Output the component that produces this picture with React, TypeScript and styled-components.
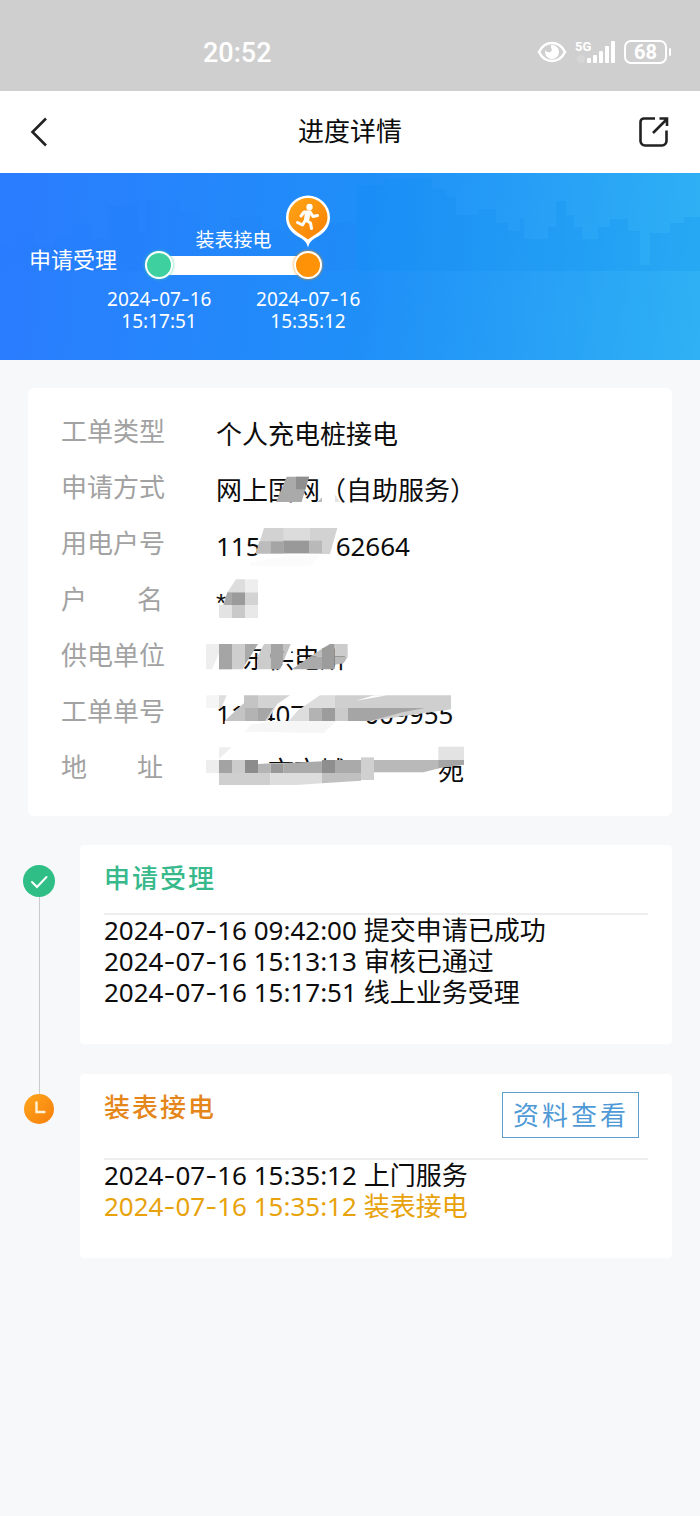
import React from "react";
import styled, { createGlobalStyle } from "styled-components";

const GlobalStyle = createGlobalStyle`
  * { box-sizing: border-box; }
  body {
    margin: 0;
    background: #f7f8fa;
    color: #0c0c0c;
    font-family: "Noto Sans", "Noto Sans CJK SC", sans-serif;
    font-size: 26px;
  }
  button { font: inherit; color: inherit; background: none; border: 0; padding: 0; cursor: pointer; }
  h1, h2, p, dl, dd, ul, ol { margin: 0; padding: 0; font-weight: 400; font-size: inherit; list-style: none; }
  svg { display: block; }
`;

const Page = styled.div`
  min-height: 100vh;
  display: flex;
  flex-direction: column;
`;

const StatusBar = styled.div`
  height: 91px;
  padding: 13px 28px 0 29%;
  display: flex;
  align-items: center;
  justify-content: space-between;
  background: #cfcfcf;
  color: #fff;
`;

const Clock = styled.span`
  padding-top: 2px;
  font-family: Roboto, sans-serif;
  font-weight: 500;
  font-size: 27px;
`;

const StatusIcons = styled.div`
  display: flex;
  align-items: center;
  gap: 8px;
`;

const Battery = styled.span`
  position: relative;
  width: 43px;
  height: 24px;
  margin-right: 5px;
  border: 2px solid #fff;
  border-radius: 7px;
  font: 700 20px/20px Roboto, sans-serif;
  text-align: center;
  &::after {
    content: "";
    position: absolute;
    right: -6px;
    top: 6px;
    width: 2px;
    height: 8px;
    border-radius: 1px;
    background: #fff;
  }
`;

const NavBar = styled.header`
  height: 82px;
  padding: 0 30px;
  display: grid;
  grid-template-columns: 32px 1fr 32px;
  align-items: center;
  background: #fff;
`;

const NavTitle = styled.h1`
  text-align: center;
  line-height: 38px;
  padding-bottom: 2px;
`;

const Banner = styled.section`
  position: relative;
  height: 187px;
  padding: 0 29px;
  display: flex;
  background: linear-gradient(96deg, #2b7cff 0%, #1f8ff8 52%, #2fb1f4 100%);
  color: #fff;
`;

const Skyline = styled.svg`
  position: absolute;
  left: 0;
  top: 0;
  width: 100%;
  height: 98px;
`;

const Origin = styled.p`
  position: relative;
  padding-top: 69px;
  font-size: 22px;
  line-height: 34px;
`;

const Stepper = styled.div`
  position: relative;
  width: 253px;
  margin-left: -10px;
  padding-top: 56px;
  font-size: 19px;
  line-height: 22px;
`;

const Caption = styled.p`
  height: 22px;
  text-align: center;
`;

const Track = styled.div`
  display: flex;
  align-items: center;
  padding: 0 38px;
`;

const Dot = styled.span<{ $color: string }>`
  position: relative;
  z-index: 1;
  width: 28px;
  height: 28px;
  border: 2px solid #fff;
  border-radius: 50%;
  background: ${(p) => p.$color};
  box-shadow: 0 0 3px ${(p) => p.$color};
`;

const Bar = styled.span`
  flex: 1;
  height: 19px;
  margin: 0 -4px;
  background: #fff;
`;

const Pin = styled.svg`
  position: absolute;
  left: 50%;
  bottom: 28px;
  transform: translateX(-50%);
`;

const Stamps = styled.div`
  display: flex;
  justify-content: space-between;
  padding-top: 9px;
  text-align: center;
`;

const Stamp = styled.div`
  width: 104px;
  white-space: nowrap;
`;

const Dash = styled.span`
  font-family: Inter, sans-serif;
  line-height: 0;
`;

const Info = styled.dl`
  margin: 28px 28px 29px;
  padding: 15px 33px 21px;
  border-radius: 6px;
  background: #fff;
`;

const InfoRow = styled.div`
  height: 56px;
  display: grid;
  grid-template-columns: 155px 1fr;
  line-height: 56px;
`;

const InfoLabel = styled.dt`
  width: 102px;
  display: flex;
  justify-content: space-between;
  white-space: nowrap;
  color: #a2a2a2;
`;

const InfoValue = styled.dd`
  position: relative;
  padding-top: 3px;
  white-space: nowrap;
`;

const Hidden = styled.span<{ $w: number }>`
  display: inline-block;
  width: ${(p) => p.$w}px;
`;

const Star = styled.span`
  font-family: "Liberation Sans", sans-serif;
`;

const Mosaic = styled.svg`
  position: absolute;
  left: -26px;
  top: 0;
`;

const Steps = styled.ol`
  padding-right: 28px;
`;

const Step = styled.li`
  display: grid;
  grid-template-columns: 80px 1fr;
`;

const Rail = styled.div`
  display: flex;
  flex-direction: column;
  align-items: center;
  padding-right: 2px;
`;

const Line = styled.span<{ $grow?: boolean; $on?: boolean }>`
  width: 1px;
  height: 20px;
  flex: ${(p) => (p.$grow ? "1" : "none")};
  background: ${(p) => (p.$on ? "#cbcbcb" : "transparent")};
`;

const Card = styled.article`
  margin-bottom: 30px;
  padding: 0 24px 36px;
  border-radius: 4px;
  background: #fff;
  line-height: 31px;
`;

const CardHead = styled.div`
  display: flex;
  justify-content: space-between;
  align-items: flex-start;
  padding-bottom: 2px;
  border-bottom: 2px solid #eeeeee;
`;

const CardTitle = styled.h2<{ $color: string }>`
  color: ${(p) => p.$color};
  line-height: 66px;
  letter-spacing: 2px;
  font-weight: 500;
`;

const ViewButton = styled.button`
  height: 46px;
  margin: 18px 9px 18px 0;
  padding: 0 9px 0 10px;
  border: 1px solid #5ea0cb;
  color: #4f9ad6;
  letter-spacing: 3px;
  line-height: 44px;
`;

const Entry = styled.li<{ $active?: boolean }>`
  color: ${(p) => (p.$active ? "#e8a20c" : "inherit")};
`;

type Shape = [string, string];

/* Each shape is a list of points and a grey; units are thirds of a pixel. */
const rows: { label: string; value: React.ReactNode; y?: number; shapes?: Shape[] }[] = [
  { label: "工单类型", value: "个人充电桩接电" },
  {
    label: "申请方式",
    value: "网上国网（自助服务）",
    y: 177,
    shapes: [
      ["290,230 357,230 335,306 258,306", "#aaaaaa"],
      ["318,230 357,230 346,268 318,268", "#8f8f8f"],
      ["383,306 396,292 396,306", "#bdbdbd"],
      ["435,284 450,306 435,306", "#e2e2e2"],
    ],
  },
  {
    label: "用电户号",
    value: <>115<Hidden $w={75} />62664</>,
    y: 345,
    shapes: [
      ["222,384 442,384 420,462 198,462", "#d2d2d2"],
      ["280,384 360,384 360,422 280,422", "#dcdcdc"],
      ["208,424 242,424 242,460 198,460", "#bcbcbc"],
      ["242,424 280,424 280,460 242,460", "#a5a5a5"],
      ["280,422 357,422 357,459 280,459", "#999999"],
      ["357,422 396,422 396,459 357,459", "#b9b9b9"],
      ["180,488 300,466 390,466 360,498 180,498", "#fbfbfb"],
    ],
  },
  {
    label: "户 名",
    value: <Star>*</Star>,
    y: 513,
    shapes: [
      ["138,538 165,538 165,577 112,577", "#dddddd"],
      ["165,538 204,538 204,577 165,577", "#eeeeee"],
      ["112,577 126,577 126,615 100,615", "#a8a8a8"],
      ["126,577 165,577 165,615 126,615", "#9b9b9b"],
      ["165,577 204,577 204,615 165,615", "#d3d3d3"],
      ["87,615 126,615 126,654 87,654", "#e3e3e3"],
      ["126,615 165,615 165,654 126,654", "#c9c9c9"],
      ["165,615 204,615 204,654 165,654", "#e8e8e8"],
    ],
  },
  {
    label: "供电单位",
    value: <><Hidden $w={26} />东供电所</>,
    y: -9,
    shapes: [
      ["281,30 318,30 300,76 330,76 300,90 281,90", "#ffffff"],
      ["48,42 87,42 87,70 66,118 48,118", "#eeeeee"],
      ["87,42 126,42 126,118 87,118", "#a5a5a5"],
      ["126,42 165,42 165,104 158,118 126,118", "#cecece"],
      ["165,42 204,42 178,84 165,104", "#aaaaaa"],
      ["222,42 242,42 242,118 202,118 202,80", "#cccccc"],
      ["242,42 281,42 281,92 270,118 242,118", "#a4a4a4"],
      ["281,42 302,42 281,92", "#c2c2c2"],
      ["420,42 434,42 434,118 396,118 396,56", "#9c9c9c"],
      ["396,56 396,80 360,80", "#bdbdbd"],
      ["360,80 396,80 396,118 306,118", "#aaaaaa"],
      ["434,42 473,42 473,80 434,80", "#cccccc"],
      ["434,80 473,80 461,100 434,104", "#bababa"],
    ],
  },
  {
    label: "工单单号",
    value: <>112407<Hidden $w={59} />009955</>,
    y: 159,
    shapes: [
      ["104,273 310,273 310,290 104,290", "#ffffff"],
      ["48,196 87,196 87,234 48,234", "#f5f5f5"],
      ["87,196 110,196 94,234 87,234", "#dedede"],
      ["162,196 204,196 204,273 104,273 145,234 162,220", "#c4c4c4"],
      ["204,196 300,196 262,222 232,273 204,273", "#d3d3d3"],
      ["165,234 204,234 204,273 165,273", "#b3b3b3"],
      ["204,234 250,234 225,273 204,273", "#a6a6a6"],
      ["390,196 435,196 435,273 296,273 325,240", "#dddddd"],
      ["435,196 783,196 783,238 540,273 435,273", "#cfcfcf"],
      ["357,234 396,234 396,273 357,273", "#b3b3b3"],
      ["396,234 435,234 435,273 396,273", "#9c9c9c"],
      ["435,234 474,234 474,273 435,273", "#cbcbcb"],
      ["474,234 705,234 640,246 540,273 474,273", "#a5a5a5"],
      ["552,196 592,196 498,212", "#ffffff"],
      ["182,284 260,273 440,273 400,310 165,305", "#f6f6f6"],
    ],
  },
  {
    label: "地 址",
    value: <><Hidden $w={52} />市市城<Hidden $w={92} />苑</>,
    y: 327,
    shapes: [
      ["180,400 552,396 552,474 180,474", "#ffffff"],
      ["48,390 87,390 87,429 48,429", "#eeeeee"],
      ["87,352 125,352 87,386", "#eeeeee"],
      ["87,390 126,390 126,429 87,429", "#a3a3a3"],
      ["126,390 165,390 165,429 126,429", "#cccccc"],
      ["165,390 204,390 204,429 165,429", "#8c8c8c"],
      ["204,402 242,400 242,429 204,429", "#b5b5b5"],
      ["242,400 281,400 281,429 242,429", "#999999"],
      ["281,400 396,394 396,429 281,429", "#aaaaaa"],
      ["396,390 435,390 435,429 396,429", "#8e8e8e"],
      ["435,390 513,390 513,429 435,429", "#aaaaaa"],
      ["513,382 552,382 552,450 513,450", "#d0d0d0"],
      ["87,429 242,429 242,465 87,465", "#cfcfcf"],
      ["242,429 396,429 396,460 320,465 242,465", "#dddddd"],
      ["396,429 513,429 513,452 396,460", "#c0c0c0"],
      ["552,390 822,390 822,404 760,412 700,427 552,427", "#b9b9b9"],
      ["745,350 822,350 822,390 745,390", "#e3e3e3"],
      ["745,390 822,390 822,404 760,412 745,415", "#a6a6a6"],
    ],
  },
];

function Labelled({ text }: { text: string }) {
  return (
    <InfoLabel>
      {text.split(" ").map((part) => (
        <span key={part}>{part}</span>
      ))}
    </InfoLabel>
  );
}

/* A date with the wide dashes of the Inter face. */
function DateText({ value }: { value: string }) {
  return (
    <time dateTime={value}>
      {value.split("-").map((part, i) => (
        <React.Fragment key={i}>
          {i > 0 && <Dash>-</Dash>}
          {part}
        </React.Fragment>
      ))}
    </time>
  );
}

export default function App() {
  return (
    <Page>
      <GlobalStyle />
      <StatusBar>
        <Clock>20:52</Clock>
        <StatusIcons>
          <svg width="30" height="22" viewBox="0 0 30 22" fill="none" aria-hidden="true">
            <path d="M2 11C5 5 9.500 2 15 2S25 5 28 11C25 17 20.500 20 15 20S5 17 2 11Z" stroke="#fff" strokeWidth="2.600" />
            <circle cx="15" cy="11" r="7" fill="#fff" />
            <path d="M8 5.500 14.500 4c-1.500 2.200.800 3.800.200 5.600-.600 1.900-3.200 2.300-6.200.400Z" fill="#cfcfcf" />
          </svg>
          <svg width="41" height="24" viewBox="0 0 41 24" fill="#fff" aria-hidden="true">
            <text x="0" y="11" fontFamily="Roboto, sans-serif" fontSize="13" fontWeight="700">5G</text>
            <circle cx="6" cy="19" r="4" opacity=".15" />
            <rect x="12" y="18" width="4" height="5" rx="1" />
            <rect x="18" y="15" width="4" height="8" rx="1" />
            <rect x="24" y="11" width="4" height="12" rx="1" />
            <rect x="30" y="6" width="4" height="17" rx="1" />
            <rect x="36" y="1" width="4" height="22" rx="1" />
          </svg>
          <Battery>68</Battery>
        </StatusIcons>
      </StatusBar>

      <NavBar>
        <button type="button" aria-label="返回">
          <svg width="20" height="32" viewBox="0 0 20 32" fill="none" stroke="#222" strokeWidth="2.600">
            <path d="M16 2.500 2.500 16 16 29.500" />
          </svg>
        </button>
        <NavTitle>进度详情</NavTitle>
        <button type="button" aria-label="分享">
          <svg width="32" height="32" viewBox="0 0 32 32" fill="none" stroke="#222" strokeWidth="2.600">
            <path d="M17 2.500H6A3.500 3.500 0 0 0 2.500 6v19A4.500 4.500 0 0 0 7 29.500h17a4.500 4.500 0 0 0 4.500-4.500V14.500M15 17 29 3M21.500 2.500h7.500V10" />
          </svg>
        </button>
      </NavBar>

      <Banner>
        <Skyline viewBox="0 0 700 98" preserveAspectRatio="none" aria-hidden="true">
          <path
            d="M0 98V72H14V58H34V72H54V64H72V50H92V66H108V32H138V60H146V28H180V38H200V60H230V44H262V56H300V40H330V50H356V98Z"
            fill="#1b6fee"
            opacity=".08"
          />
          <path
            d="M356 98V12H384V6H432V16H446V24H456V42H478V36H496V50H508V58H520V46H524V66H548V54H556V28H566V42H574V54H582V66H598V54H610V46H628V58H640V92H650V60H670V50H684V44H700V98Z"
            fill="#0b8df0"
            opacity=".2"
          />
        </Skyline>
        <Origin>申请受理</Origin>
        <Stepper>
          <Caption>装表接电</Caption>
          <Track>
            <Dot $color="#3fd0a0" />
            <Bar />
            <Dot $color="#ff9206">
              <Pin width="50" height="56" viewBox="0 0 50 56" aria-hidden="true">
                <defs>
                  <linearGradient id="pin" x1="0" y1="0" x2="1" y2="1">
                    <stop offset="0" stopColor="#ffa616" />
                    <stop offset="1" stopColor="#f97f05" />
                  </linearGradient>
                </defs>
                <path d="M25 2.500A22 22 0 0 0 3 24.500c0 9 5.500 15.500 12 19 5 2.500 8.500 5 10 11 1.500-6 5-8.500 10-11 6.500-3.500 12-10 12-19a22 22 0 0 0-22-22Z" fill="#fff" />
                <path d="M25 5A19.500 19.500 0 0 0 5.500 24.500C5.500 34.500 14 39 25 46.500c11-7.500 19.500-12 19.500-22A19.500 19.500 0 0 0 25 5Z" fill="url(#pin)" />
                <circle cx="26.500" cy="14" r="3.200" fill="#fff" />
                <path d="m18 23 3-4 6-.2 3 4.700 4.500-1M25 19l-2.500 8 5 3 1 5.500M22.500 27l-3 5-5-2.500" fill="none" stroke="#fff" strokeWidth="3" strokeLinecap="round" strokeLinejoin="round" />
                <path d="m22 18.500 6 .5-2 9-5-1Z" fill="#fff" />
              </Pin>
            </Dot>
          </Track>
          <Stamps>
            <Stamp><DateText value="2024-07-16" /><br />15:17:51</Stamp>
            <Stamp><DateText value="2024-07-16" /><br />15:35:12</Stamp>
          </Stamps>
        </Stepper>
      </Banner>

      <Info>
        {rows.map((row) => (
          <InfoRow key={row.label}>
            <Labelled text={row.label} />
            <InfoValue>
              {row.value}
              {row.shapes && (
                <Mosaic width="300" height="56" viewBox={`0 ${row.y} 900 168`} aria-hidden="true">
                  {row.shapes.map(([points, fill]) => (
                    <polygon key={points} points={points} fill={fill} />
                  ))}
                </Mosaic>
              )}
            </InfoValue>
          </InfoRow>
        ))}
      </Info>

      <Steps>
        <Step>
          <Rail>
            <Line />
            <svg width="32" height="32" viewBox="0 0 32 32" aria-hidden="true">
              <circle cx="16" cy="16" r="16" fill="#2fbf86" />
              <path d="m9 17 5 5 9.500-10" fill="none" stroke="#fff" strokeWidth="2" strokeLinecap="round" />
            </svg>
            <Line $grow $on />
          </Rail>
          <Card>
            <CardHead>
              <CardTitle $color="#38b98c">申请受理</CardTitle>
            </CardHead>
            <ul>
              <Entry><DateText value="2024-07-16" /> 09:42:00 提交申请已成功</Entry>
              <Entry><DateText value="2024-07-16" /> 15:13:13 审核已通过</Entry>
              <Entry><DateText value="2024-07-16" /> 15:17:51 线上业务受理</Entry>
            </ul>
          </Card>
        </Step>
        <Step>
          <Rail>
            <Line $on />
            <svg width="30" height="30" viewBox="0 0 30 30" aria-hidden="true">
              <defs>
                <linearGradient id="clock" x1="0" y1="0" x2="1" y2="1">
                  <stop offset="0" stopColor="#ffa61c" />
                  <stop offset="1" stopColor="#f67f0b" />
                </linearGradient>
              </defs>
              <circle cx="15" cy="15" r="15" fill="url(#clock)" />
              <path d="M12.500 8.500v9.500h8" fill="none" stroke="#fff2d8" strokeWidth="2.400" strokeLinecap="round" />
            </svg>
          </Rail>
          <Card>
            <CardHead>
              <CardTitle $color="#e5861a">装表接电</CardTitle>
              <ViewButton type="button">资料查看</ViewButton>
            </CardHead>
            <ul>
              <Entry><DateText value="2024-07-16" /> 15:35:12 上门服务</Entry>
              <Entry $active><DateText value="2024-07-16" /> 15:35:12 装表接电</Entry>
            </ul>
          </Card>
        </Step>
      </Steps>
    </Page>
  );
}
